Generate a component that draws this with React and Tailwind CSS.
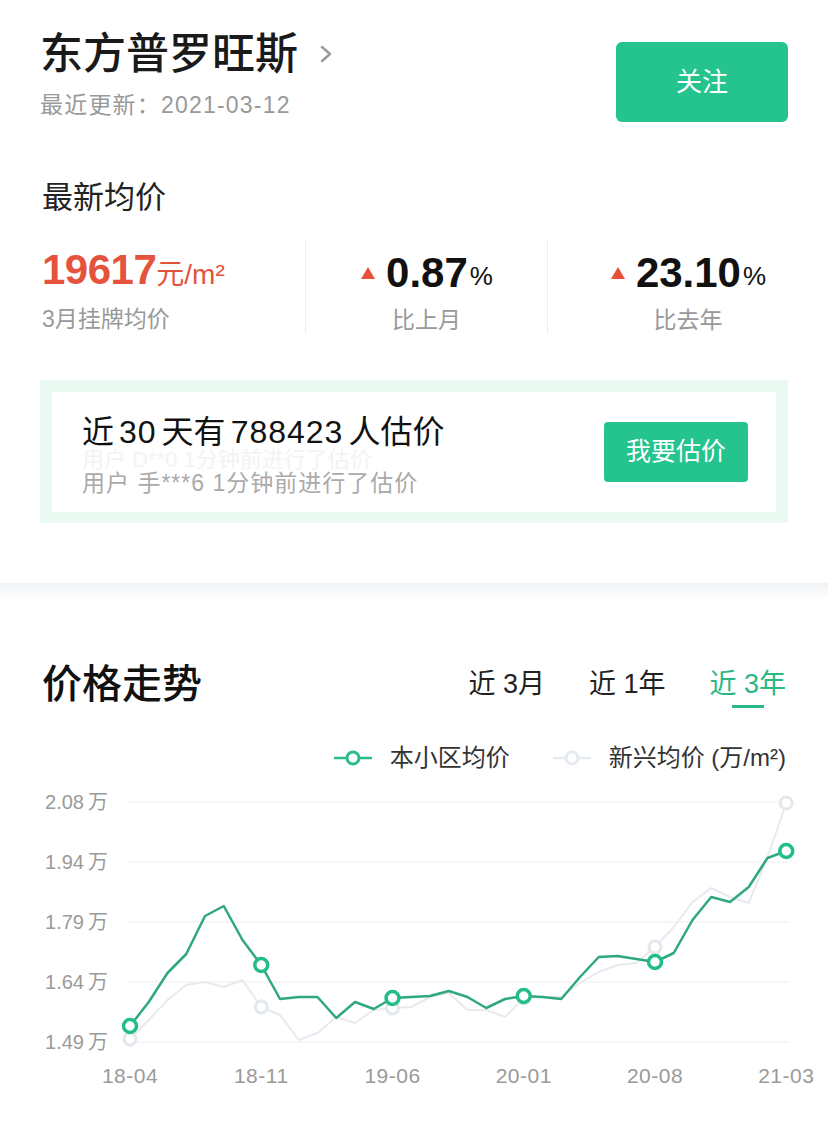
import React from 'react';

const green = [1026, 1002, 973, 954, 916, 906, 940, 965, 999, 997, 997, 1018, 1002, 1009, 998, 997, 996, 991, 997, 1008, 999, 996, 997, 999, 977, 957, 956, 959, 962, 953, 920, 897, 902, 887, 858, 851];
const gray = [1039, 1020, 1000, 985, 982, 987, 980, 1007, 1015, 1040, 1033, 1017, 1023, 1010, 1008, 1007, 997, 993, 1010, 1010, 1017, 998, 997, 997, 983, 972, 965, 963, 947, 927, 902, 888, 897, 903, 857, 803];
const xAt = (i) => 130 + i * 18.75;
const marks = [0, 7, 14, 21, 28, 35];
const grid = [
  { y: 802, label: '2.08' },
  { y: 862, label: '1.94' },
  { y: 922, label: '1.79' },
  { y: 982, label: '1.64' },
  { y: 1042, label: '1.49' },
];
const xLabels = ['18-04', '18-11', '19-06', '20-01', '20-08', '21-03'];
const svgFont = "'Liberation Sans', 'Noto Sans CJK SC', sans-serif";

function Triangle() {
  return (
    <svg width="16" height="14" viewBox="0 0 16 14" className="mr-[10px]">
      <polygon points="8,1 15,13 1,13" fill="#e8503a" />
    </svg>
  );
}

function LegendIcon({ color }) {
  return (
    <svg width="38" height="16" viewBox="0 0 38 16">
      <line x1="0" y1="8" x2="38" y2="8" stroke={color} strokeWidth="2.5" />
      <circle cx="19" cy="8" r="6" fill="white" stroke={color} strokeWidth="3" />
    </svg>
  );
}

function Chart() {
  const pts = (arr) => arr.map((y, i) => `${xAt(i)},${y}`).join(' ');
  return (
    <svg width="828" height="320" viewBox="0 785 828 320" className="block">
      {grid.map((g) => (
        <g key={g.y}>
          <line x1="128" y1={g.y} x2="788" y2={g.y} stroke="#ededed" strokeWidth="1" />
          <text x="108" y={g.y + 7} textAnchor="end" fontSize="20" fill="#9a9a9a" fontFamily={svgFont}>
            {g.label}
            <tspan dx="4">万</tspan>
          </text>
        </g>
      ))}
      <polyline points={pts(gray)} fill="none" stroke="#e7eaf0" strokeWidth="2" strokeLinejoin="round" />
      {marks.map((i) => (
        <circle key={'g' + i} cx={xAt(i)} cy={gray[i]} r="6" fill="white" stroke="#e3e7ee" strokeWidth="3" />
      ))}
      <polyline points={pts(green)} fill="none" stroke="#30a87d" strokeWidth="2.5" strokeLinejoin="round" />
      {marks.map((i) => (
        <circle key={'s' + i} cx={xAt(i)} cy={green[i]} r="6.5" fill="white" stroke="#22bd88" strokeWidth="3.5" />
      ))}
      {xLabels.map((l, k) => (
        <text key={l} x={130 + k * 131.25} y="1083" textAnchor="middle" fontSize="21" letterSpacing="0.5" fill="#9a9a9a" fontFamily={svgFont}>
          {l}
        </text>
      ))}
    </svg>
  );
}

export default function App() {
  return (
    <div className="h-[1122px] w-[828px] overflow-hidden bg-white font-['Liberation_Sans','Noto_Sans_CJK_SC',sans-serif] text-[#222]">
      {/* header */}
      <div className="flex justify-between px-[40px] pt-[30px]">
        <div>
          <div className="flex items-center">
            <h1 className="text-[43px] font-medium leading-[48px] text-[#1a1a1a]">东方普罗旺斯</h1>
            <svg width="16" height="22" viewBox="0 0 16 22" className="ml-[20px]">
              <polyline points="4,4 12,11 4,18" fill="none" stroke="#9a9a9a" strokeWidth="2.5" strokeLinecap="round" strokeLinejoin="round" />
            </svg>
          </div>
          <p className="mt-[12px] text-[23px] leading-[30px] tracking-[1.2px] text-[#999]">最近更新：2021-03-12</p>
        </div>
        <button className="mt-[12px] h-[80px] w-[172px] rounded-[6px] bg-[#25c48e] text-[26px] text-white">关注</button>
      </div>

      <h2 className="mt-[56px] px-[42px] text-[31px] leading-[40px] text-[#222]">最新均价</h2>

      {/* stats */}
      <div className="mt-[22px] flex h-[94px] pl-[42px]">
        <div className="w-[263px] pt-[4px]">
          <div className="flex items-baseline leading-[52px] text-[#e6533c]">
            <span className="text-[42px] font-bold tracking-[-0.5px]">19617</span>
            <span className="text-[28px]">元/m²</span>
          </div>
          <p className="mt-[3px] text-[23px] leading-[30px] text-[#999]">3月挂牌均价</p>
        </div>
        <div className="flex w-[242px] flex-col items-center border-l border-[#eeeeee] pt-[4px]">
          <div className="flex items-center leading-[52px]">
            <Triangle />
            <span className="text-[42px] font-bold text-[#111]">0.87</span>
            <span className="ml-[2px] mt-[6px] text-[26px] text-[#111]">%</span>
          </div>
          <p className="mt-[3px] text-[23px] leading-[30px] text-[#999]">比上月</p>
        </div>
        <div className="flex flex-1 flex-col items-center border-l border-[#eeeeee] pt-[4px]">
          <div className="flex items-center leading-[52px]">
            <Triangle />
            <span className="text-[42px] font-bold text-[#111]">23.10</span>
            <span className="ml-[2px] mt-[6px] text-[26px] text-[#111]">%</span>
          </div>
          <p className="mt-[3px] text-[23px] leading-[30px] text-[#999]">比去年</p>
        </div>
      </div>

      {/* estimate card */}
      <div className="mx-[40px] mt-[46px] h-[143px] bg-[#ebf9f3] pb-[11px] pl-[12px] pr-[12px] pt-[12px]">
        <div className="flex h-full items-center justify-between bg-white pl-[30px] pr-[28px]">
          <div className="self-start pt-[20px]">
            <p className="text-[32px] leading-[40px] text-[#111]">
              近<span className="mx-[5px] tracking-[1px]">30</span>天有<span className="mx-[5px] tracking-[1px]">788423</span>人估价
            </p>
            <p className="h-[16px] text-[22px] leading-[16px] text-[#f3f3f3]">用户 D**0 1分钟前进行了估价</p>
            <p className="text-[23px] leading-[30px] tracking-[1px] text-[#aaa]">用户 手***6 1分钟前进行了估价</p>
          </div>
          <button className="h-[60px] w-[144px] rounded-[4px] bg-[#25c48e] text-[25px] text-white">我要估价</button>
        </div>
      </div>

      <div className="mt-[60px] h-[16px] bg-gradient-to-b from-[#f0f2f4] to-white" />

      {/* price trend */}
      <div className="mt-[61px] flex items-center justify-between pl-[42px] pr-[42px]">
        <h2 className="text-[40px] font-medium leading-[48px] text-[#111]">价格走势</h2>
        <div className="flex gap-[44px] text-[27px] leading-[48px]">
          <span className="text-[#222]">近 3月</span>
          <span className="text-[#222]">近 1年</span>
          <span className="relative text-[#2bb783]">
            近 3年
            <span className="absolute bottom-[0px] left-1/2 h-[3px] w-[32px] -translate-x-1/2 bg-[#2bb783]" />
          </span>
        </div>
      </div>

      <div className="mt-[35px] flex items-center justify-end pr-[42px] text-[24px] leading-[30px] text-[#333]">
        <LegendIcon color="#2bbd88" />
        <span className="ml-[18px] mr-[43px]">本小区均价</span>
        <LegendIcon color="#e6eaf1" />
        <span className="ml-[18px]">新兴均价 (万/m²)</span>
      </div>

      <div className="mt-[12px]">
        <Chart />
      </div>
    </div>
  );
}
